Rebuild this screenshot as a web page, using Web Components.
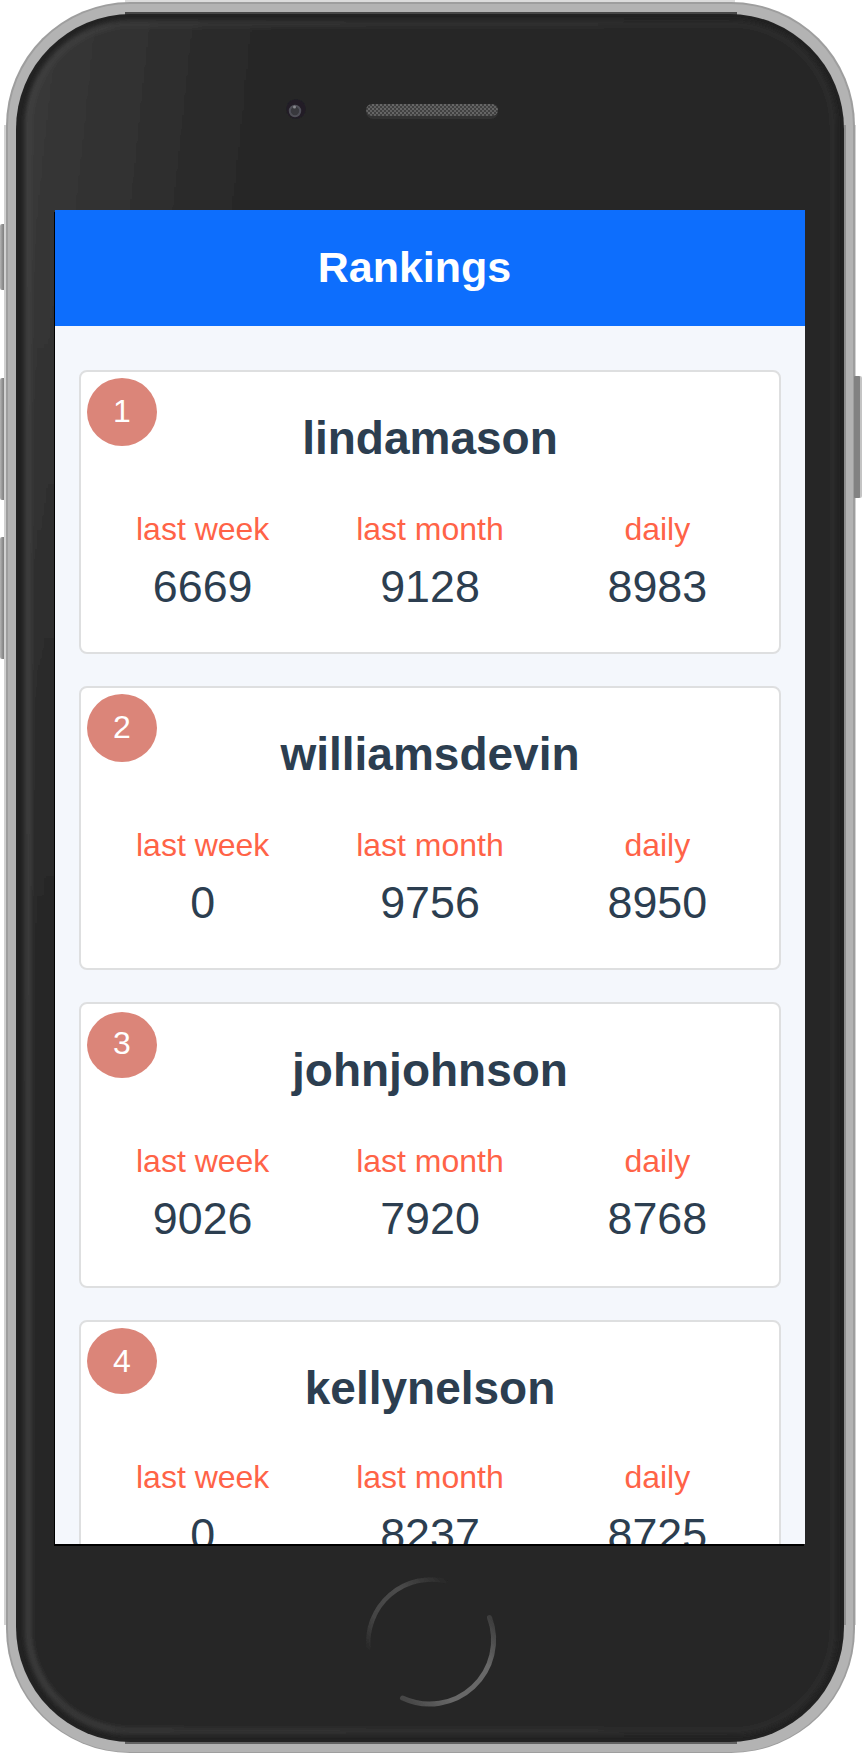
<!DOCTYPE html>
<html lang="en">
<head>
<meta charset="utf-8">
<title>Rankings</title>
<style>
html,body{margin:0;background:#fff}
body{font-family:"Liberation Sans",Arial,sans-serif;color:#2c3e50;width:862px;height:1754px;overflow:hidden}
</style>
</head>
<body>
<phone-frame>
  <app-header>Rankings</app-header>
  <ranking-list>
    <rank-card rank="1" name="lindamason" week="6669" month="9128" daily="8983"></rank-card>
    <rank-card rank="2" name="williamsdevin" week="0" month="9756" daily="8950"></rank-card>
    <rank-card rank="3" name="johnjohnson" week="9026" month="7920" daily="8768" style="--h:286px;--badge-h:66px;--badge-top:8px;--badge-lh:62px"></rank-card>
    <rank-card rank="4" name="kellynelson" week="0" month="8237" daily="8725" style="--badge-h:66px;--stats-gap:45px"></rank-card>
  </ranking-list>
</phone-frame>
<script>
class PhoneFrame extends HTMLElement {
  constructor() {
    super();
    this.attachShadow({mode: 'open'}).innerHTML = `
<style>
:host{display:grid;width:862px;height:1754px}
svg{grid-area:1/1;display:block}
.screen{grid-area:1/1;margin:210px 57px 210px 55px;width:750px;height:1334px;overflow:hidden;background:#f4f7fc}
</style>
<svg width="862" height="1754" viewBox="0 0 862 1754">
  <defs>
    <linearGradient id="btn" x1="0" x2="1" y1="0" y2="0"><stop offset="0" stop-color="#b4b4b4"/><stop offset=".45" stop-color="#868686"/><stop offset="1" stop-color="#7b7b7b"/></linearGradient>
    <linearGradient id="sheenX" x1="16" x2="300" y1="0" y2="30" gradientUnits="userSpaceOnUse"><stop offset="0" stop-color="#3a3a3a"/><stop offset=".35" stop-color="#323232"/><stop offset=".8" stop-color="#292929"/><stop offset="1" stop-color="#262626"/></linearGradient>
    <linearGradient id="fade" x1="0" x2="0" y1="0" y2="1100" gradientUnits="userSpaceOnUse"><stop offset=".25" stop-color="#262626" stop-opacity="0"/><stop offset="1" stop-color="#262626"/></linearGradient>
    <linearGradient id="rim" x1="0" x2="862" y1="0" y2="0" gradientUnits="userSpaceOnUse"><stop offset="0" stop-color="#444"/><stop offset=".25" stop-color="#353535"/><stop offset="1" stop-color="#2b2b2b"/></linearGradient>
    <filter id="soft" x="-5%" y="-5%" width="110%" height="110%"><feGaussianBlur stdDeviation="2.2"/></filter>
    <filter id="tiny"><feGaussianBlur stdDeviation=".6"/></filter>
    <pattern id="mesh" width="4" height="4" patternUnits="userSpaceOnUse"><rect width="4" height="4" fill="#404040"/><rect width="2" height="2" fill="#666"/><rect x="2" y="2" width="2" height="2" fill="#606060"/></pattern>
    <linearGradient id="arcA" x1="366" y1="1650" x2="447" y2="1578" gradientUnits="userSpaceOnUse"><stop offset="0" stop-color="#262626"/><stop offset=".25" stop-color="#444"/><stop offset=".6" stop-color="#4c4c4c"/><stop offset="1" stop-color="#262626"/></linearGradient>
    <linearGradient id="arcB" x1="400" y1="1698" x2="490" y2="1614" gradientUnits="userSpaceOnUse"><stop offset="0" stop-color="#444"/><stop offset=".3" stop-color="#686868"/><stop offset=".7" stop-color="#686868"/><stop offset="1" stop-color="#3a3a3a"/></linearGradient>
  </defs>
  <g fill="url(#btn)">
    <rect x="0" y="224" width="7" height="66" rx="2"/>
    <rect x="0" y="378" width="7" height="122" rx="2"/>
    <rect x="0" y="537" width="7" height="122" rx="2"/>
  </g>
  <rect x="853" y="376" width="9" height="122" rx="2" fill="#c4c4c4"/>
  <rect x="125" y="0" width="610" height="4" fill="#dcdcdc"/>
  <rect x="4" y="125" width="852" height="1500" fill="#d2d2d2"/>
  <rect x="6" y="2" width="849" height="1751" rx="124" fill="#9e9e9e"/>
  <rect x="8" y="4" width="845" height="1748" rx="122" fill="#b3b3b3"/>
  <rect x="854" y="376" width="6" height="122" rx="1" fill="#828282"/>
  <rect x="844" y="125" width="2" height="1500" fill="#8f8f8f"/>
  <rect x="125" y="12" width="612" height="3" fill="#484848"/>
  <rect x="125" y="1741" width="612" height="3" fill="#626262"/>
  <rect x="16" y="14" width="828" height="1728" rx="115" fill="#222"/>
  <g filter="url(#soft)">
    <rect x="25" y="20" width="812" height="1715" rx="106" fill="url(#sheenX)"/>
    <rect x="25" y="20" width="812" height="1715" rx="106" fill="url(#fade)"/>
    <rect x="28" y="24" width="805" height="1707" rx="103" fill="none" stroke="url(#rim)" stroke-width="7" opacity=".75"/>
  </g>
  <circle cx="296" cy="109" r="10" fill="#201f25" filter="url(#tiny)"/>
  <circle cx="295" cy="111" r="5.2" fill="#37373d" stroke="#505058" stroke-width="2" filter="url(#tiny)"/>
  <circle cx="294.500" cy="107" r="1.500" fill="#88888e"/>
  <rect x="366" y="105" width="132" height="14" rx="7" fill="#303030" filter="url(#tiny)"/>
  <rect x="366" y="104" width="132" height="12" rx="6" fill="url(#mesh)" filter="url(#tiny)"/>
  <g fill="none" filter="url(#tiny)" stroke-linecap="round">
    <path d="M368.500 1648A63 63 0 0 1 445 1581" stroke="url(#arcA)" stroke-width="4.500"/>
    <path d="M489.500 1617.500A64 64 0 0 1 402.500 1698" stroke="url(#arcB)" stroke-width="5"/>
  </g>
  <path d="M54 212H55V1546H54zM55 1544H804V1546H55z" fill="#000"/>
</svg>
<div class="screen"><slot></slot></div>`;
  }
}
class AppHeader extends HTMLElement {
  constructor() {
    super();
    this.attachShadow({mode: 'open'}).innerHTML = `
<style>
:host{display:block;box-sizing:border-box;height:116px;padding-right:31px;background:#0d6efd;color:#fff;text-align:center;font-weight:700;font-size:43px;line-height:115px}
</style><slot></slot>`;
  }
}
class RankingList extends HTMLElement {
  constructor() {
    super();
    this.attachShadow({mode: 'open'}).innerHTML = `
<style>
:host{display:flex;flex-direction:column;gap:32px;padding:44px 24px}
</style><slot></slot>`;
  }
}
class RankCard extends HTMLElement {
  connectedCallback() {
    const a = n => this.getAttribute(n);
    const cell = (label, v) => `<div class="cell"><div class="label">${label}</div><div class="value">${v}</div></div>`;
    this.attachShadow({mode: 'open'}).innerHTML = `
<style>
:host{display:block;position:relative;box-sizing:border-box;width:702px;height:var(--h,284px);flex:none;background:#fff;border:2px solid #dedfe0;border-radius:8px;padding:0 8px}
.badge{position:absolute;left:6px;top:var(--badge-top,6px);width:70px;height:var(--badge-h,68px);line-height:var(--badge-lh,66px);border-radius:50%;background:#db8579;color:#fff;font-size:32px;text-align:center}
.name{margin:0;padding-top:40px;height:52px;line-height:52px;font-size:46px;font-weight:700;text-align:center}
.stats{display:grid;grid-template-columns:repeat(3,1fr);text-align:center;padding-top:var(--stats-gap,47px)}
.label{font-size:32px;line-height:36px;color:#ff6347}
.value{font-size:44.800px;line-height:52px;padding-top:13px}
</style>
<div class="badge">${a('rank')}</div>
<h3 class="name">${a('name')}</h3>
<div class="stats">${cell('last week', a('week'))}${cell('last month', a('month'))}${cell('daily', a('daily'))}</div>`;
  }
}
customElements.define('phone-frame', PhoneFrame);
customElements.define('app-header', AppHeader);
customElements.define('ranking-list', RankingList);
customElements.define('rank-card', RankCard);
</script>
</body>
</html>
